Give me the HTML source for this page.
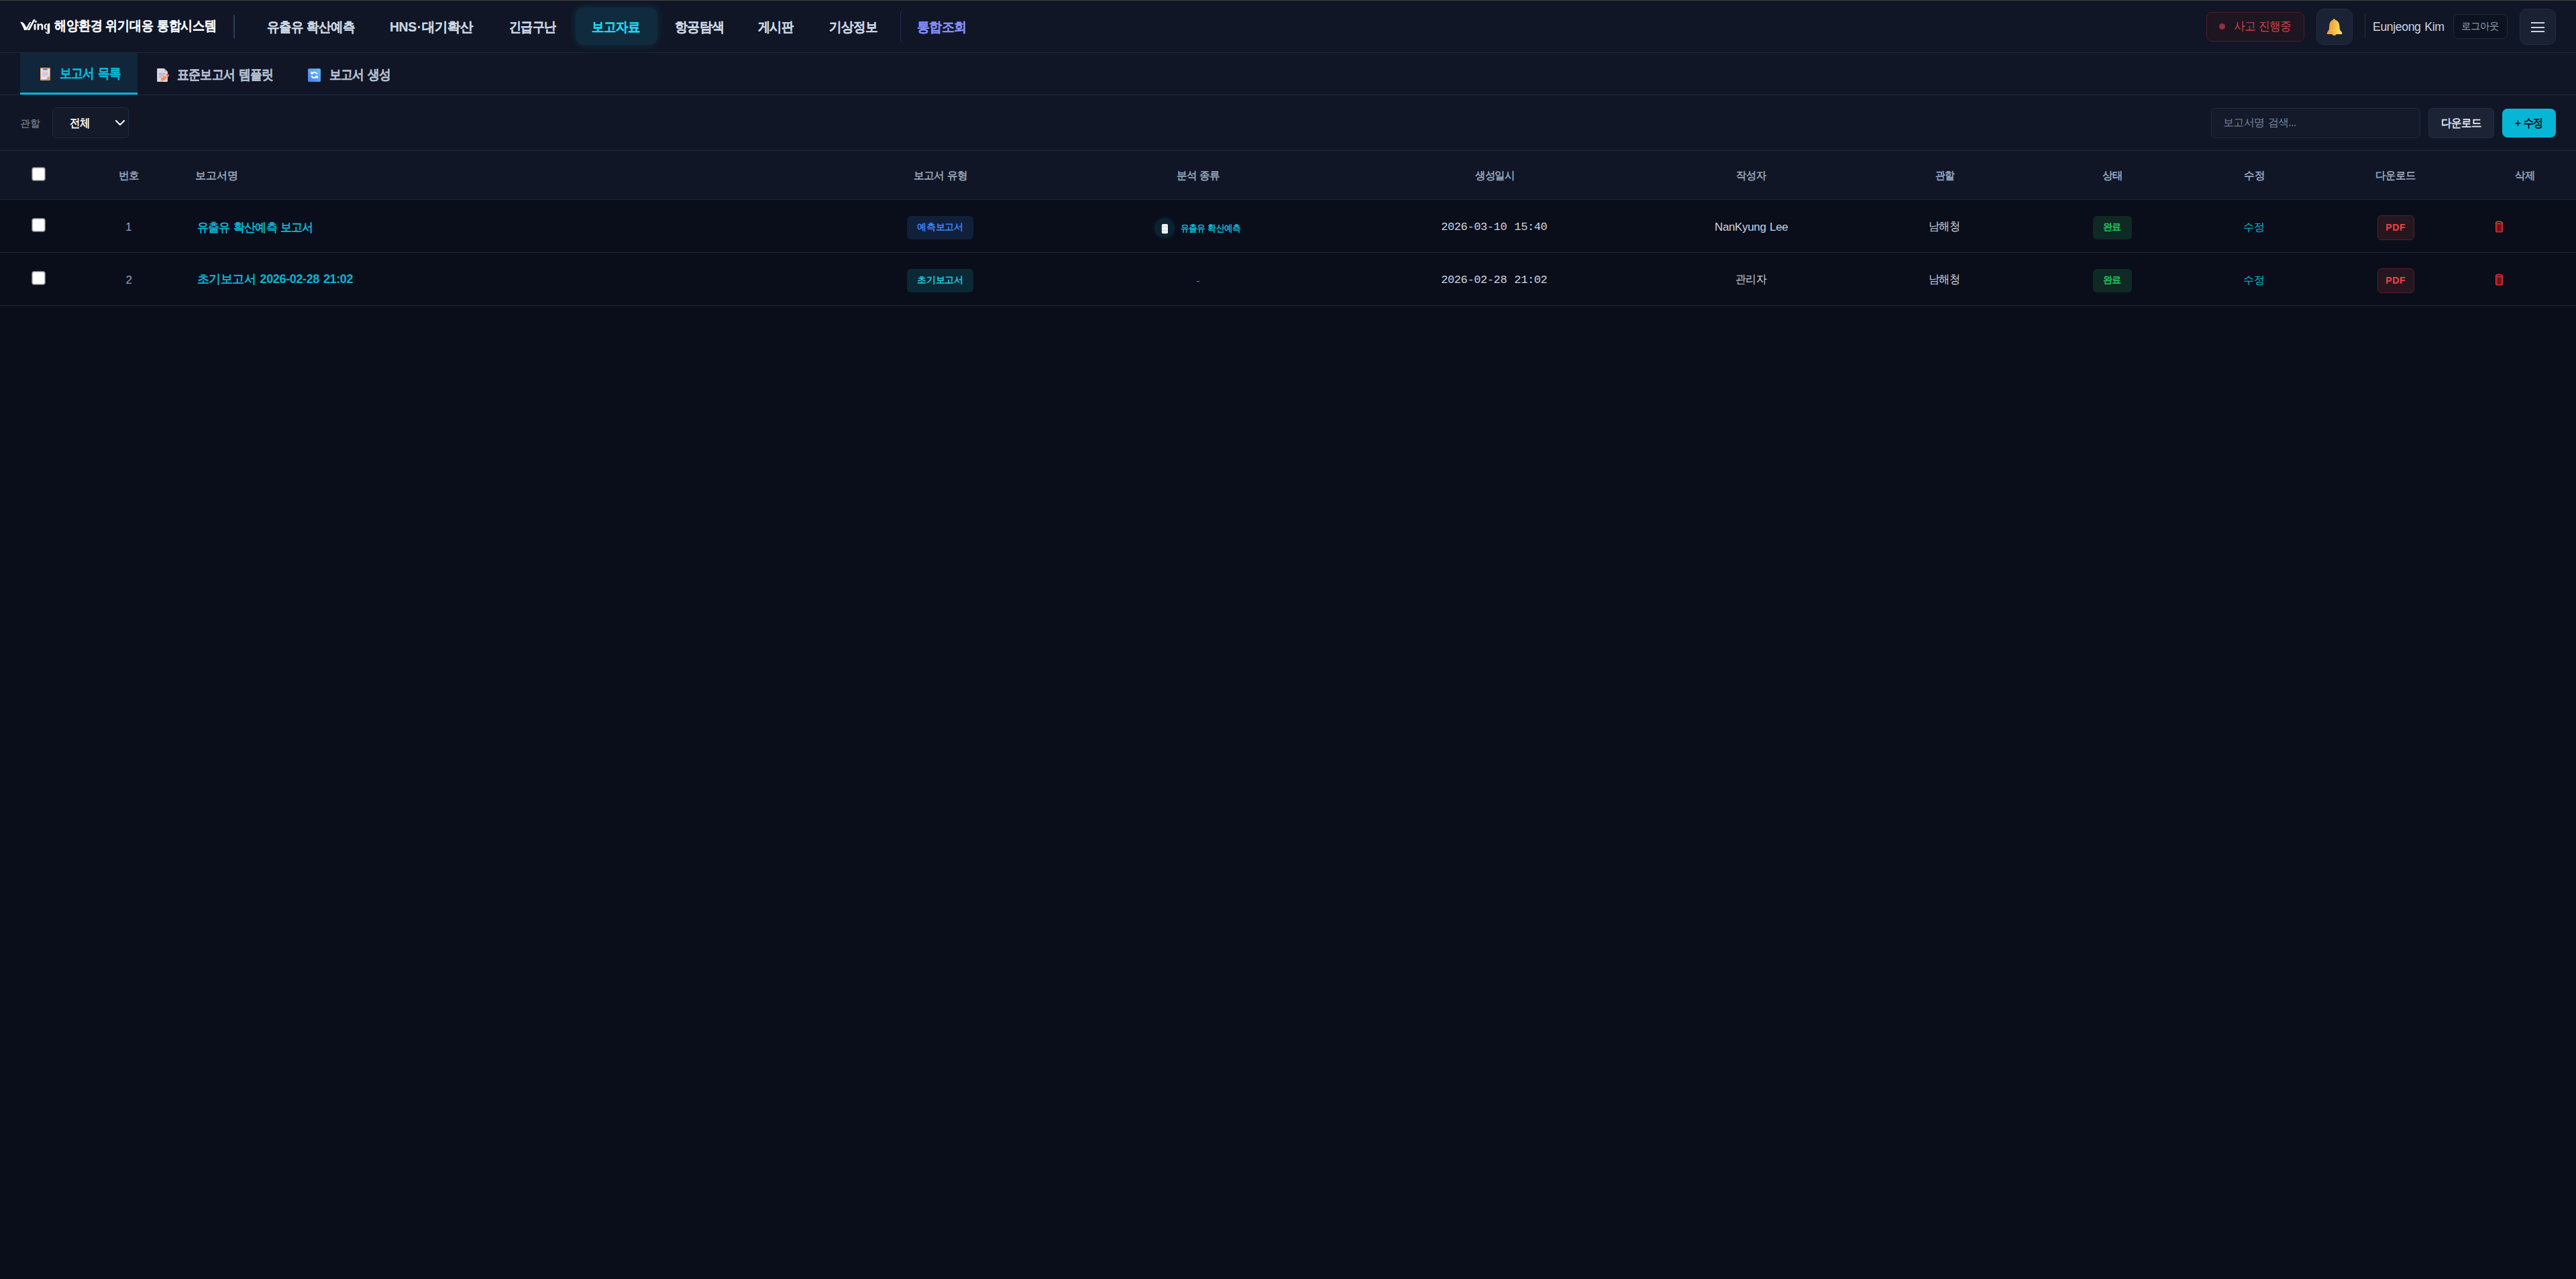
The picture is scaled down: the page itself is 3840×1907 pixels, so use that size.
<!DOCTYPE html>
<html><head><meta charset="utf-8"><style>
*{margin:0;padding:0;box-sizing:border-box}
html,body{width:3840px;height:1907px;overflow:hidden;background:#0a0e1a;font-family:'Liberation Sans',sans-serif}
.a{position:absolute}
.t{position:absolute;white-space:nowrap;line-height:1.2}
.b{-webkit-text-stroke:0.2px currentColor}
</style></head>
<body>
<div class=a style="left:0px;top:0px;width:3840px;height:1px;background:#434240"></div><div class=a style="left:0px;top:1px;width:3840px;height:296px;background:#101626"></div><div class=a style="left:0px;top:78px;width:3840px;height:1px;background:#1e283e"></div><div class=a style="left:0px;top:141px;width:3840px;height:1px;background:#1e283e"></div><div class=a style="left:0px;top:224px;width:3840px;height:1px;background:#1e283e"></div><div class=a style="left:0px;top:297px;width:3840px;height:1px;background:#1e283e"></div><div class=a style="left:0px;top:376px;width:3840px;height:1px;background:#1e283e"></div><div class=a style="left:0px;top:455px;width:3840px;height:1px;background:#1e283e"></div><div class=a style="left:348px;top:22px;width:2px;height:35px;background:#2b3a5a"></div><div class=a style="left:858px;top:11px;width:122px;height:56px;background:#0f2b3d;border-radius:12px;box-shadow:0 0 12px rgba(6,182,212,0.18)"></div><div class=a style="left:1342px;top:13px;width:20px;height:53px;border-left:1px solid #262a5c;border-radius:8px 0 0 8px"></div><div class=a style="left:3289px;top:18px;width:146px;height:44px;background:#1d1520;border:1px solid #4c202a;border-radius:8px"></div><div class=a style="left:3308px;top:35px;width:9px;height:9px;background:#93303a;border-radius:50%"></div><div class=a style="left:3453px;top:13px;width:54px;height:54px;background:#1a2236;border:1px solid #212c44;border-radius:11px"></div><div class=a style="left:3525px;top:21px;width:1px;height:37px;background:#222c40"></div><div class=a style="left:3657px;top:21px;width:81px;height:37px;background:#0d1221;border:1px solid #1f2a40;border-radius:7px"></div><div class=a style="left:3756px;top:13px;width:54px;height:54px;background:#1a2133;border:1px solid #222d42;border-radius:11px"></div><div class=a style="left:3773px;top:33px;width:20px;height:2px;background:#cbd5e1"></div><div class=a style="left:3773px;top:40px;width:20px;height:2px;background:#cbd5e1"></div><div class=a style="left:3773px;top:46px;width:20px;height:2px;background:#cbd5e1"></div><div class=a style="left:30px;top:79px;width:175px;height:62px;background:#11263a"></div><div class=a style="left:30px;top:138px;width:175px;height:3px;background:#06b6d4"></div><div class=a style="left:78px;top:160px;width:114px;height:46px;background:#141a2a;border:1px solid #1f2a40;border-radius:6px"></div><div class=a style="left:3296px;top:161px;width:312px;height:45px;background:#141a2a;border:1px solid #1f2a40;border-radius:6px"></div><div class=a style="left:3620px;top:161px;width:98px;height:45px;background:#1b2335;border:1px solid #232d42;border-radius:6px"></div><div class=a style="left:3730px;top:162px;width:80px;height:43px;background:#06b6d4;border-radius:8px"></div><div class=a style="left:47px;top:249px;width:21px;height:21px;background:#fff;border:1px solid #6f6f6f;box-shadow:inset 0 0 0 1px #bdbdbd;border-radius:4px"></div><div class=a style="left:47px;top:325px;width:21px;height:21px;background:#fff;border:1px solid #6f6f6f;box-shadow:inset 0 0 0 1px #bdbdbd;border-radius:4px"></div><div class=a style="left:47px;top:404px;width:21px;height:21px;background:#fff;border:1px solid #6f6f6f;box-shadow:inset 0 0 0 1px #bdbdbd;border-radius:4px"></div><div class=a style="left:1352px;top:322px;width:99px;height:35px;background:#11203a;border-radius:6px"></div><div class=a style="left:3120px;top:322px;width:58px;height:35px;background:#0f2a24;border-radius:6px"></div><div class=a style="left:3544px;top:321px;width:55px;height:37px;background:#251620;border:1px solid #5a1f29;border-radius:6px"></div><div class=a style="left:1352px;top:401px;width:99px;height:35px;background:#0b2835;border-radius:6px"></div><div class=a style="left:3120px;top:401px;width:58px;height:35px;background:#0f2a24;border-radius:6px"></div><div class=a style="left:3544px;top:400px;width:55px;height:37px;background:#251620;border:1px solid #5a1f29;border-radius:6px"></div><div class=a style="left:1721px;top:325px;width:30px;height:30px;background:#0b2231;border-radius:50%;box-shadow:0 0 6px rgba(6,182,212,0.12)"></div>
<svg class=a style="left:171px;top:178px" width="16" height="11" viewBox="0 0 16 11"><path d="M2 2 L8 8 L14 2" fill="none" stroke="#f1f5f9" stroke-width="2.2" stroke-linecap="round" stroke-linejoin="round"/></svg><svg class=a style="left:3719px;top:328px" width="13" height="19" viewBox="0 0 13 19"><path d="M1.6,5.2 L11.4,5.2 L11.4,16 C11.4,17.2 10.6,18 9.4,18 L3.6,18 C2.4,18 1.6,17.2 1.6,16 Z" fill="#a3161c" stroke="#e03434" stroke-width="1.2"/><path d="M5.2,7.4 V16.2 M7.9,7.4 V16.2" stroke="#0a0e1a" stroke-width="0.9"/><path d="M1.4,4.9 C1.4,1.4 11.6,1.4 11.6,4.9" fill="none" stroke="#e33a3a" stroke-width="1.5"/></svg><svg class=a style="left:3719px;top:407px" width="13" height="19" viewBox="0 0 13 19"><path d="M1.6,5.2 L11.4,5.2 L11.4,16 C11.4,17.2 10.6,18 9.4,18 L3.6,18 C2.4,18 1.6,17.2 1.6,16 Z" fill="#a3161c" stroke="#e03434" stroke-width="1.2"/><path d="M5.2,7.4 V16.2 M7.9,7.4 V16.2" stroke="#0a0e1a" stroke-width="0.9"/><path d="M1.4,4.9 C1.4,1.4 11.6,1.4 11.6,4.9" fill="none" stroke="#e33a3a" stroke-width="1.5"/></svg><svg class=a style="left:1731px;top:333px" width="11" height="16" viewBox="0 0 11 16"><rect x="0.8" y="0.9" width="9.2" height="14.4" rx="1.8" fill="#f3f3f7"/><path d="M1.2,5.3 H9.6 M1.2,10.6 H9.6" stroke="#c5c8d6" stroke-width="0.8"/></svg><svg class=a style="left:55px;top:96px" width="25" height="28" viewBox="0 0 25 28">
<defs><linearGradient id="cb" x1="0" y1="0" x2="1" y2="1"><stop offset="0" stop-color="#f7b56a"/><stop offset="1" stop-color="#e58f4a"/></linearGradient></defs>
<rect x="5" y="4.9" width="15" height="19.1" rx="0.8" fill="url(#cb)"/>
<path d="M6.3,7 H18.8 V17.6 L14.3,22.1 H6.3 Z" fill="#e9e3f5"/>
<path d="M14.3,22.1 V18.6 Q14.3,17.6 15.3,17.6 H18.8 Z" fill="#cbc3da"/>
<rect x="9.1" y="5.9" width="6.7" height="2.9" rx="0.6" fill="#8a8292"/>
<circle cx="12.4" cy="5.3" r="1" fill="#8a8292"/>
<path d="M8,11.4 H16.8 M8,13.6 H16.8 M8,15.5 H16.8 M8,17.5 H13" stroke="#bab2c8" stroke-width="1"/>
</svg><svg class=a style="left:228px;top:98px" width="28" height="28" viewBox="0 0 28 28">
<path d="M7,4 H16.8 L21.9,9 V22.9 Q21.9,23.9 20.9,23.9 H7 Q6.1,23.9 6.1,22.9 V5 Q6.1,4 7,4 Z" fill="#ddd5e6"/>
<path d="M16.8,4 V8 Q16.8,9 17.8,9 H21.9 Z" fill="#c3bbcc"/>
<path d="M9.2,11.4 H18.4 M9.2,13.3 H18.4 M9.2,15.4 H16 M9.2,17.5 H13" stroke="#a69fb0" stroke-width="0.9"/>
<g transform="translate(10.6,23.4) rotate(-38.7)">
<path d="M0,0 L3.2,-2.2 V2.2 Z" fill="#f2b8a0"/>
<rect x="3.2" y="-2.2" width="8.3" height="4.4" fill="#ff8a3a"/>
<rect x="11.5" y="-2.2" width="1.5" height="4.4" fill="#dcd6ee"/>
<path d="M13,-2.2 H15 Q16.4,-2.2 16.4,-0.8 V0.8 Q16.4,2.2 15,2.2 H13 Z" fill="#ff5e4e"/>
</g>
</svg><svg class=a style="left:454px;top:98px" width="28" height="28" viewBox="0 0 28 28">
<defs><linearGradient id="rb" x1="1" y1="0" x2="0" y2="1"><stop offset="0" stop-color="#66c0fb"/><stop offset="1" stop-color="#4a7fe6"/></linearGradient></defs>
<rect x="5" y="4.3" width="19" height="19.6" rx="1.6" fill="url(#rb)"/>
<path d="M18.8,12.6 A4.7,4.7 0 0 0 11.4,11" fill="none" stroke="#fdf6ff" stroke-width="2.1"/>
<path d="M9.2,8.1 V12.8 H13.9 Z" fill="#fdf6ff"/>
<path d="M10.3,15.2 A4.7,4.7 0 0 0 17.7,16.8" fill="none" stroke="#fdf6ff" stroke-width="2.1"/>
<path d="M19.9,19.7 V15 H15.2 Z" fill="#fdf6ff"/>
</svg><svg class=a style="left:3455px;top:15px" width="50" height="50" viewBox="0 0 50 50"><defs><linearGradient id="bg1" x1="0" y1="0" x2="1" y2="0.15"><stop offset="0" stop-color="#e8903c"/><stop offset="0.5" stop-color="#f4b440"/><stop offset="1" stop-color="#ffe35a"/></linearGradient></defs>
<ellipse cx="24.6" cy="36.4" rx="2.8" ry="1.5" fill="#f2a36a"/>
<path fill="url(#bg1)" d="M24.4,13 C25.3,13 25.8,13.7 25.8,14.5 C29.9,15.6 32.1,19.1 32.4,23.6 L32.9,29.6 L36.2,33.6 L36.2,36 L13.9,36 L13.9,33.6 L16.8,29.6 L17.2,23.6 C17.5,19.1 19.3,15.6 23,14.5 C23,13.7 23.5,13 24.4,13 Z"/>
<path d="M15.2,30.6 L33.8,30.6" stroke="#ffe070" stroke-opacity="0.35" stroke-width="1"/>
</svg><svg class=a style="left:26px;top:24px" width="54" height="30" viewBox="0 0 54 30"><g fill="#fff">
<path d="M4,8.8 C7.5,8.6 9.6,10.2 11.2,13 L14,18.2 L11.6,21 L10.2,21 C8.4,16.4 6.6,12.2 4,8.8 Z"/>
<path d="M11.2,20.8 L17.6,9.8 C18.3,8.9 19.4,8.6 20.2,8.9 L14.2,20.8 Z"/>
<path d="M14.8,21 L23.2,6.2 C24,5 25.4,4.7 26.6,4.9 L18.6,20.2 C17.8,21 16.2,21.2 14.8,21 Z"/>
<circle cx="27.2" cy="8.2" r="1.6"/>
<path d="M24.6,12.2 L27.4,11.4 L27.4,20.6 L24.6,20.6 Z"/>
<path d="M29.6,11.6 L32.2,11 L32.2,12.8 C33.2,11.6 34.8,11 36.4,11.4 C37.6,11.8 38.2,12.8 38.2,14.2 L38.2,20.6 L35.6,20.6 L35.6,14.6 C35.6,13.6 34.8,13.2 33.8,13.5 L32.2,14.4 L32.2,20.6 L29.6,20.6 Z"/>
<path d="M43.8,11 C41.2,11.2 39.6,13.2 39.6,15.8 C39.6,18.4 41.2,20.2 43.4,20.4 L43.4,18.8 C42.4,18.4 42,17.2 42,15.8 C42,14 42.6,12.8 43.8,12.4 Z"/>
<path d="M44.6,11.8 L48.2,10.6 L48.2,23.8 C48.2,25.6 47.2,26.6 45.6,26.6 C43.6,26.6 42.2,25.4 41.4,23.6 L42.4,23 C43.2,24.2 44,24.8 44.8,24.6 C45,24.4 44.6,23.8 44.6,23 Z"/>
</g></svg>
<div class="t b" style="left:81.0px;top:25.8px;font-family:'Liberation Sans', sans-serif;font-size:20px;font-weight:700;color:#f1f5f9;letter-spacing:-0.14px;word-spacing:0.00px;transform:scaleX(0.9);transform-origin:0 0">해양환경 위기대응 통합시스템</div><div class="t b" style="left:398.0px;top:28.0px;font-family:'Liberation Sans', sans-serif;font-size:20px;font-weight:700;color:#cbd5e1;letter-spacing:-0.76px;word-spacing:1.60px;transform:scaleX(0.924);transform-origin:0 0">유출유 확산예측</div><div class="t b" style="left:581.0px;top:28.0px;font-family:'Liberation Sans', sans-serif;font-size:20px;font-weight:700;color:#cbd5e1;letter-spacing:-0.43px;word-spacing:0.00px;transform:scaleX(0.968);transform-origin:0 0">HNS · 대기확산</div><div class="t b" style="left:759.0px;top:28.0px;font-family:'Liberation Sans', sans-serif;font-size:20px;font-weight:700;color:#cbd5e1;letter-spacing:-0.77px;word-spacing:0.00px;transform:scaleX(0.901);transform-origin:0 0">긴급구난</div><div class="t b" style="left:882.3px;top:27.9px;font-family:'Liberation Sans', sans-serif;font-size:20px;font-weight:700;color:#22d3ee;letter-spacing:-0.48px;word-spacing:0.00px;transform:scaleX(0.919);transform-origin:0 0">보고자료</div><div class="t b" style="left:1006.0px;top:28.0px;font-family:'Liberation Sans', sans-serif;font-size:20px;font-weight:700;color:#cbd5e1;letter-spacing:-0.76px;word-spacing:0.00px;transform:scaleX(0.951);transform-origin:0 0">항공탐색</div><div class="t b" style="left:1130.0px;top:28.0px;font-family:'Liberation Sans', sans-serif;font-size:20px;font-weight:700;color:#cbd5e1;letter-spacing:-0.89px;word-spacing:0.00px;transform:scaleX(0.912);transform-origin:0 0">게시판</div><div class="t b" style="left:1236.0px;top:28.0px;font-family:'Liberation Sans', sans-serif;font-size:20px;font-weight:700;color:#cbd5e1;letter-spacing:-0.42px;word-spacing:0.00px;transform:scaleX(0.927);transform-origin:0 0">기상정보</div><div class="t b" style="left:1367.0px;top:28.0px;font-family:'Liberation Sans', sans-serif;font-size:20px;font-weight:700;color:#818cf8;letter-spacing:-0.76px;word-spacing:0.00px;transform:scaleX(0.951);transform-origin:0 0">통합조회</div><div class=t style="left:3330.0px;top:29.4px;font-family:'Liberation Sans', sans-serif;font-size:18px;color:#d44646;letter-spacing:-0.97px;word-spacing:1.54px;transform:scaleX(0.931);transform-origin:0 0">사고 진행중</div><div class=t style="left:3537.4px;top:30.4px;font-family:'Liberation Sans', sans-serif;font-size:18px;color:#cbd5e1;letter-spacing:-0.41px;word-spacing:1.30px;transform:scaleX(0.983);transform-origin:0 0">Eunjeong Kim</div><div class=t style="left:3669.0px;top:29.8px;font-family:'Liberation Sans', sans-serif;font-size:15px;color:#94a3b8;letter-spacing:-0.57px;word-spacing:0.00px;transform:scaleX(0.96);transform-origin:0 0">로그아웃</div><div class="t b" style="left:89.3px;top:96.7px;font-family:'Liberation Sans', sans-serif;font-size:20px;font-weight:700;color:#06b6d4;letter-spacing:-0.61px;word-spacing:1.61px;transform:scaleX(0.879);transform-origin:0 0">보고서 목록</div><div class="t b" style="left:264.1px;top:98.8px;font-family:'Liberation Sans', sans-serif;font-size:20px;font-weight:700;color:#b4bdcf;letter-spacing:-0.69px;word-spacing:1.61px;transform:scaleX(0.891);transform-origin:0 0">표준보고서 템플릿</div><div class="t b" style="left:491.4px;top:98.8px;font-family:'Liberation Sans', sans-serif;font-size:20px;font-weight:700;color:#b4bdcf;letter-spacing:-0.82px;word-spacing:1.60px;transform:scaleX(0.891);transform-origin:0 0">보고서 생성</div><div class=t style="left:30.2px;top:174.6px;font-family:'Liberation Sans', sans-serif;font-size:15px;color:#8490a4;letter-spacing:-0.50px;word-spacing:0.00px;transform:scaleX(1.0);transform-origin:0 0">관할</div><div class=t style="left:104.0px;top:173.8px;font-family:'Liberation Sans', sans-serif;font-size:17px;font-weight:700;color:#f8fafc;letter-spacing:-0.73px;word-spacing:0.00px;transform:scaleX(0.908);transform-origin:0 0">전체</div><div class=t style="left:3314.1px;top:173.4px;font-family:'Liberation Sans', sans-serif;font-size:16px;color:#7a8599;letter-spacing:-0.69px;word-spacing:1.49px;transform:scaleX(1.0);transform-origin:0 0">보고서명 검색...</div><div class=t style="left:3639.1px;top:174.4px;font-family:'Liberation Sans', sans-serif;font-size:17px;font-weight:700;color:#dfe4ee;letter-spacing:-0.58px;word-spacing:0.00px;transform:scaleX(0.91);transform-origin:0 0">다운로드</div><div class=t style="left:3748.8px;top:173.8px;font-family:'Liberation Sans', sans-serif;font-size:17px;font-weight:700;color:#020617;letter-spacing:-0.91px;word-spacing:1.46px;transform:scaleX(0.888);transform-origin:0 0">+ 수정</div><div class=t style="left:176.8px;top:251.6px;font-family:'Liberation Sans', sans-serif;font-size:16px;font-weight:700;color:#94a3b8;letter-spacing:-0.30px;word-spacing:0.00px;transform:scaleX(0.974);transform-origin:0 0">번호</div><div class=t style="left:290.6px;top:251.6px;font-family:'Liberation Sans', sans-serif;font-size:16px;font-weight:700;color:#94a3b8;;transform:scaleX(1.0);transform-origin:0 0">보고서명</div><div class=t style="left:1361.9px;top:251.8px;font-family:'Liberation Sans', sans-serif;font-size:16px;font-weight:700;color:#94a3b8;letter-spacing:-0.77px;word-spacing:1.49px;transform:scaleX(0.978);transform-origin:0 0">보고서 유형</div><div class=t style="left:1753.8px;top:251.8px;font-family:'Liberation Sans', sans-serif;font-size:16px;font-weight:700;color:#94a3b8;letter-spacing:-0.81px;word-spacing:1.50px;transform:scaleX(0.968);transform-origin:0 0">분석 종류</div><div class=t style="left:2199.0px;top:252.0px;font-family:'Liberation Sans', sans-serif;font-size:16px;font-weight:700;color:#94a3b8;letter-spacing:-0.69px;word-spacing:0.00px;transform:scaleX(0.956);transform-origin:0 0">생성일시</div><div class=t style="left:2588.2px;top:252.0px;font-family:'Liberation Sans', sans-serif;font-size:16px;font-weight:700;color:#94a3b8;letter-spacing:-0.29px;word-spacing:0.00px;transform:scaleX(0.954);transform-origin:0 0">작성자</div><div class=t style="left:2884.8px;top:252.0px;font-family:'Liberation Sans', sans-serif;font-size:16px;font-weight:700;color:#94a3b8;letter-spacing:-0.53px;word-spacing:0.00px;transform:scaleX(0.927);transform-origin:0 0">관할</div><div class=t style="left:3134.4px;top:251.8px;font-family:'Liberation Sans', sans-serif;font-size:16px;font-weight:700;color:#94a3b8;letter-spacing:-0.48px;word-spacing:0.00px;transform:scaleX(0.97);transform-origin:0 0">상태</div><div class=t style="left:3344.7px;top:251.8px;font-family:'Liberation Sans', sans-serif;font-size:16px;font-weight:700;color:#94a3b8;letter-spacing:-0.09px;word-spacing:0.00px;transform:scaleX(0.977);transform-origin:0 0">수정</div><div class=t style="left:3541.2px;top:251.8px;font-family:'Liberation Sans', sans-serif;font-size:16px;font-weight:700;color:#94a3b8;letter-spacing:-0.49px;word-spacing:0.00px;transform:scaleX(0.961);transform-origin:0 0">다운로드</div><div class=t style="left:3748.5px;top:251.8px;font-family:'Liberation Sans', sans-serif;font-size:16px;font-weight:700;color:#94a3b8;letter-spacing:-0.28px;word-spacing:0.00px;transform:scaleX(0.957);transform-origin:0 0">삭제</div><div class=t style="left:187.0px;top:328.5px;font-family:'Liberation Sans', sans-serif;font-size:17px;color:#94a3b8;;transform:scaleX(1.0);transform-origin:0 0">1</div><div class=t style="left:187.5px;top:407.5px;font-family:'Liberation Sans', sans-serif;font-size:17px;color:#94a3b8;;transform:scaleX(1.0);transform-origin:0 0">2</div><div class=t style="left:293.6px;top:328.6px;font-family:'Liberation Sans', sans-serif;font-size:18px;font-weight:700;color:#06b6d4;letter-spacing:-0.81px;word-spacing:1.50px;transform:scaleX(0.942);transform-origin:0 0">유출유 확산예측 보고서</div><div class=t style="left:293.5px;top:406.4px;font-family:'Liberation Sans', sans-serif;font-size:18px;font-weight:700;color:#06b6d4;letter-spacing:-0.36px;word-spacing:1.21px;transform:scaleX(1.0);transform-origin:0 0">초기보고서 2026-02-28 21:02</div><div class=t style="left:1367.3px;top:330.1px;font-family:'Liberation Sans', sans-serif;font-size:14px;font-weight:700;color:#3b82f6;letter-spacing:-0.33px;word-spacing:0.00px;transform:scaleX(1.0);transform-origin:0 0">예측보고서</div><div class=t style="left:1367.3px;top:409.1px;font-family:'Liberation Sans', sans-serif;font-size:14px;font-weight:700;color:#22c5dc;letter-spacing:-0.33px;word-spacing:0.00px;transform:scaleX(1.0);transform-origin:0 0">초기보고서</div><div class=t style="left:1760.1px;top:332.0px;font-family:'Liberation Sans', sans-serif;font-size:14px;font-weight:700;color:#06b6d4;letter-spacing:-0.62px;word-spacing:1.43px;transform:scaleX(0.903);transform-origin:0 0">유출유 확산예측</div><div class=t style="left:1783.2px;top:409.2px;font-family:'Liberation Sans', sans-serif;font-size:16px;color:#64748b;;transform:scaleX(1.0);transform-origin:0 0">-</div><div class=t style="left:2148.2px;top:329.1px;font-family:'Liberation Mono', monospace;font-size:17px;color:#cbd5e1;letter-spacing:-0.40px;word-spacing:1.33px;transform:scaleX(1.0);transform-origin:0 0">2026-03-10 15:40</div><div class=t style="left:2148.2px;top:408.1px;font-family:'Liberation Mono', monospace;font-size:17px;color:#cbd5e1;letter-spacing:-0.40px;word-spacing:1.33px;transform:scaleX(1.0);transform-origin:0 0">2026-02-28 21:02</div><div class=t style="left:2556.0px;top:328.8px;font-family:'Liberation Sans', sans-serif;font-size:17px;color:#cbd5e1;letter-spacing:-0.36px;word-spacing:1.18px;transform:scaleX(1.0);transform-origin:0 0">NanKyung Lee</div><div class=t style="left:2587.2px;top:407.0px;font-family:'Liberation Sans', sans-serif;font-size:17px;color:#cbd5e1;letter-spacing:-0.72px;word-spacing:0.00px;transform:scaleX(0.937);transform-origin:0 0">관리자</div><div class=t style="left:2875.2px;top:327.5px;font-family:'Liberation Sans', sans-serif;font-size:17px;color:#cbd5e1;letter-spacing:-1.01px;word-spacing:0.00px;transform:scaleX(0.959);transform-origin:0 0">남해청</div><div class=t style="left:3134.8px;top:330.4px;font-family:'Liberation Sans', sans-serif;font-size:14px;font-weight:700;color:#22c55e;letter-spacing:-0.50px;word-spacing:0.00px;transform:scaleX(1.0);transform-origin:0 0">완료</div><div class=t style="left:3344.2px;top:329.1px;font-family:'Liberation Sans', sans-serif;font-size:16px;color:#06b6d4;letter-spacing:0.20px;word-spacing:0.00px;transform:scaleX(1.0);transform-origin:0 0">수정</div><div class=t style="left:3556.3px;top:330.5px;font-family:'Liberation Sans', sans-serif;font-size:14px;font-weight:700;color:#ef4444;letter-spacing:0.60px;word-spacing:0.00px;transform:scaleX(1.0);transform-origin:0 0">PDF</div><div class=t style="left:2875.2px;top:406.5px;font-family:'Liberation Sans', sans-serif;font-size:17px;color:#cbd5e1;letter-spacing:-1.01px;word-spacing:0.00px;transform:scaleX(0.959);transform-origin:0 0">남해청</div><div class=t style="left:3134.8px;top:409.4px;font-family:'Liberation Sans', sans-serif;font-size:14px;font-weight:700;color:#22c55e;letter-spacing:-0.50px;word-spacing:0.00px;transform:scaleX(1.0);transform-origin:0 0">완료</div><div class=t style="left:3344.2px;top:408.1px;font-family:'Liberation Sans', sans-serif;font-size:16px;color:#06b6d4;letter-spacing:0.20px;word-spacing:0.00px;transform:scaleX(1.0);transform-origin:0 0">수정</div><div class=t style="left:3556.3px;top:409.5px;font-family:'Liberation Sans', sans-serif;font-size:14px;font-weight:700;color:#ef4444;letter-spacing:0.60px;word-spacing:0.00px;transform:scaleX(1.0);transform-origin:0 0">PDF</div>
</body></html>
